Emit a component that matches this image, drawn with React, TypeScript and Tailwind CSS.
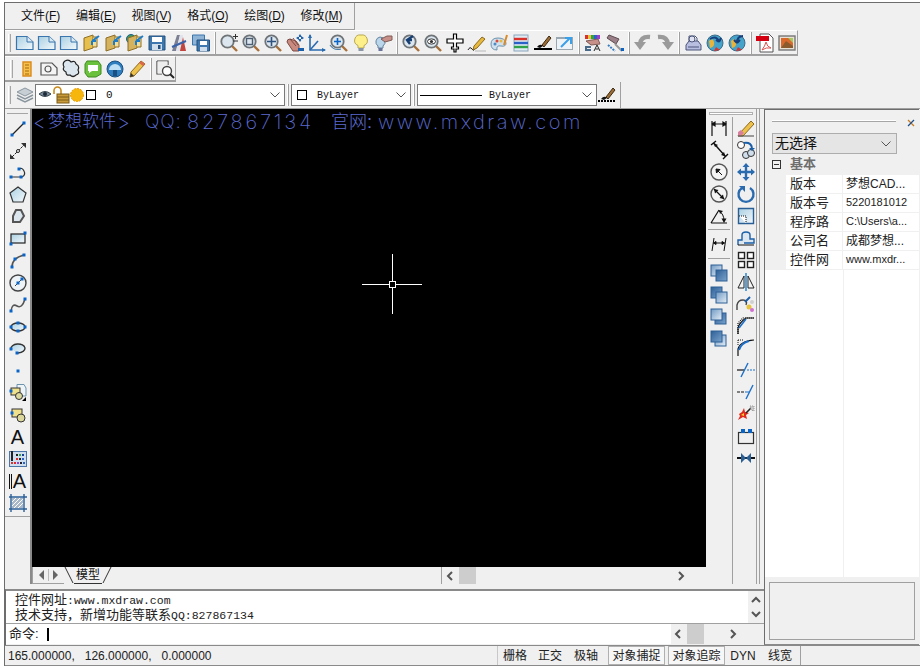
import type { ReactNode } from "react";

const sans = "font-['Liberation_Sans','Noto_Sans_CJK_SC',sans-serif]";
const B = "#0a64c8";

function Ic({ children, size = 20 }: { children: ReactNode; size?: number }) {
  return (
    <svg width={size} height={size} viewBox="0 0 20 20" className="block shrink-0">
      {children}
    </svg>
  );
}

function Defs() {
  return (
    <svg className="block h-0 w-0">
      <defs>
        <linearGradient id="doc" x1="0" y1="0" x2="1" y2="1">
          <stop offset="0" stopColor="#a9cfe2" />
          <stop offset="1" stopColor="#f4f9fc" />
        </linearGradient>
        <linearGradient id="sq" x1="0" y1="0" x2="1" y2="1">
          <stop offset="0" stopColor="#2d5f96" />
          <stop offset="1" stopColor="#7ba3cc" />
        </linearGradient>
        <linearGradient id="sq2" x1="0" y1="0" x2="1" y2="1">
          <stop offset="0" stopColor="#6f98c4" />
          <stop offset="1" stopColor="#e6eff6" />
        </linearGradient>
      </defs>
    </svg>
  );
}

const G = ({ x, y }: { x: number; y: number }) => <rect x={x - 1.5} y={y - 1.5} width="3" height="3" fill={B} />;

const Doc = () => (
  <Ic>
    <path d="M1.5 3.5H12L18 9V16.5H1.5Z" fill="url(#doc)" stroke="#3a76ad" strokeWidth="1.2" />
    <path d="M12 3.5V9H18" fill="#dbe9f2" stroke="#3a76ad" />
  </Ic>
);

const Folder = ({ c = "#e7bf4f", globe }: { c?: string; globe?: boolean }) => (
  <Ic>
    {globe && <circle cx="6" cy="6" r="4.5" fill="#3f9a5f" stroke="#1e5d8a" />}
    <path d="M3 5L12 2V15L3 18Z" fill={c} stroke="#8e6d24" />
    <path d="M12 4H16V14H12" fill="#f3dc94" stroke="#8e6d24" />
    <path d="M18 3L11 8M11 8L15 8M11 8V12" stroke="#1c7cc9" strokeWidth="2" fill="none" />
  </Ic>
);

const Floppy = () => (
  <Ic>
    <path d="M2 3H18V17H2Z" fill="#3e77ad" stroke="#23507f" />
    <rect x="5" y="4" width="10" height="5" fill="#fff" />
    <rect x="5" y="11" width="10" height="6" fill="#cfdeea" />
    <rect x="11" y="12" width="2.5" height="4" fill="#23507f" />
  </Ic>
);

const Mag = ({ children }: { children?: ReactNode }) => (
  <>
    <path d="M12.5 12.5L18 18" stroke="#a8703a" strokeWidth="2.4" />
    <circle cx="8.5" cy="8.5" r="6.2" fill="#dbe6ee" stroke="#6f7478" strokeWidth="1.8" />
    {children}
  </>
);

const Globe = ({ flip }: { flip?: boolean }) => (
  <Ic>
    <circle cx="10" cy="10" r="8" fill="#45a3c9" stroke="#3b6a8a" />
    <path d="M4 8Q8 4 9 9T5 15" fill="#e9b43c" />
    <path d="M11 14L15 17L9 18Z" fill="#d8342b" />
    <path
      d={flip ? "M16 3Q10 3 10 10M10 10L7 7M10 10L13 7" : "M5 6Q12 2 14 9M14 9L11 7M14 9L16 5"}
      stroke="#163f7c"
      strokeWidth="2"
      fill="none"
    />
  </Ic>
);

const rowTwo: ReactNode[][] = [
  [
    <Doc />,
    <Doc />,
    <Doc />,
    <Folder />,
    <Folder c="#d4b25e" />,
    <Folder c="#d4b25e" globe />,
    <Floppy />,
    <Ic>
      <path d="M3 18L8 2H11L7 18Z" fill="#7d7f92" />
      <path d="M7 18L11 2H14L13 18Z" fill="#e1e3ea" />
      <path d="M11 18L14 4L17 18Z" fill="#c2453f" />
      <path d="M3 14L17 8" stroke="#3a62a8" strokeWidth="2" />
    </Ic>,
    <Ic>
      <path d="M1.5 2H13.5V12H1.5Z" fill="#8fb4d6" stroke="#3a76ad" />
      <path d="M6 7H18.5V18H6Z" fill="#3e77ad" stroke="#23507f" />
      <rect x="9" y="8" width="7" height="4" fill="#fff" />
      <rect x="9" y="14" width="7" height="4" fill="#cfdeea" />
    </Ic>,
  ],
  [
    <Ic>
      <Mag />
      <path d="M14 3.5H19M16.5 1V6M14 8H19" stroke="#333" />
    </Ic>,
    <Ic>
      <Mag>
        <rect x="5.5" y="5.5" width="6" height="6" fill="none" stroke="#4e5e72" strokeWidth="1.4" />
      </Mag>
    </Ic>,
    <Ic>
      <Mag>
        <path d="M8.5 4V13M4 8.5H13" stroke="#30527f" strokeWidth="1.6" />
      </Mag>
    </Ic>,
    <Ic>
      <path d="M2 9Q2 6 5 6L11 8L14 12V18H8Z" fill="#c98a80" stroke="#7d4a44" />
      <path d="M5 6L11 13M8 5L13 12" stroke="#7d4a44" />
      <path d="M15 1L13 4H17ZM15 9L13 6H17ZM11 5L14 3V7ZM19 5L16 3V7Z" fill="#1b5fa8" />
      <rect x="13" y="15" width="6" height="3" fill="#1b5fa8" />
    </Ic>,
    <Ic>
      <path d="M3 2V17H18" fill="none" stroke="#2a6bb0" strokeWidth="1.6" />
      <path d="M3 17L11 8" stroke="#2a6bb0" strokeWidth="1.6" />
      <path d="M1 5L3 1L5 5ZM15 15L19 17L15 19Z" fill="#2a6bb0" />
    </Ic>,
    <Ic>
      <Mag>
        <path d="M8.5 5V12M5 8.5H12" stroke={B} strokeWidth="1.6" />
      </Mag>
      <path d="M1 12Q5 18 12 16" fill="none" stroke="#4e7ea8" strokeWidth="1.2" />
    </Ic>,
    <Ic>
      <path d="M10 2A5.5 5.5 0 0 0 7 12.5V15H13V12.5A5.5 5.5 0 0 0 10 2Z" fill="#fdf08a" stroke="#b9a850" />
      <rect x="7.5" y="15" width="5" height="3" fill="#8a96a6" />
    </Ic>,
    <Ic>
      <path d="M7 4A5 5 0 0 0 5 13V15H10V13A5 5 0 0 0 7 4Z" fill="#b9d6ea" stroke="#66849e" />
      <rect x="5.5" y="15" width="4" height="3" fill="#66749a" />
      <path d="M8 6L14 3L19 3V7L12 9Z" fill="#c7918a" stroke="#805a54" />
    </Ic>,
  ],
  [
    <Ic>
      <Mag />
      <path d="M12 3L6 7L9 11M6 7H11" stroke="#173f73" strokeWidth="2.4" fill="none" />
    </Ic>,
    <Ic>
      <Mag>
        <ellipse cx="8.5" cy="8.5" rx="4" ry="2.6" fill="#fff" stroke="#333" />
        <circle cx="8.5" cy="8.5" r="1.6" fill="#333" />
      </Mag>
    </Ic>,
    <Ic>
      <path
        d="M8.5 1H11.5V6H18V10H11.5V14H13.5V16H11V19H9V16H6.5V14H8.5V10H2V6H8.5Z"
        fill="#fff"
        stroke="#000"
        strokeWidth="1.2"
      />
    </Ic>,
    <Ic>
      <path d="M1 17Q3 13 5 16T8 15" fill="none" stroke="#222" />
      <path d="M7 13L15 4L18 6L10 15L6 17Z" fill="#e8b93c" stroke="#8a6a20" />
      <path d="M8 18H19" stroke="#b8b8b8" />
    </Ic>,
    <Ic>
      <path d="M2 11Q2 5 9 5T17 10Q17 14 12 13T8 17Q2 17 2 11Z" fill="#cfe1ee" stroke="#6d93ad" />
      <circle cx="6" cy="11" r="1.5" fill="#4f8ac2" />
      <circle cx="8" cy="8" r="1.5" fill="#d94a3c" />
      <circle cx="12" cy="8" r="1.5" fill="#e8b93c" />
      <path d="M15 12L18 2" stroke="#d98a2b" strokeWidth="2" />
    </Ic>,
    <Ic>
      <rect x="3" y="2" width="14" height="16" fill="#dfeaf2" stroke="#8aa6bc" />
      <path d="M3 6H16" stroke="#d9302a" strokeWidth="2.4" />
      <path d="M3 10H17" stroke="#2a62c8" strokeWidth="2.4" />
      <path d="M3 14H17" stroke="#2fa24a" strokeWidth="2.4" />
    </Ic>,
    <Ic>
      <path d="M9 12L16 3L18 5L11 14Z" fill="#9c6c34" stroke="#3c2a12" />
      <path d="M4 14Q7 10 10 13L7 15Z" fill="#111" />
      <path d="M1 16H19" stroke="#000" strokeWidth="2" />
    </Ic>,
    <Ic>
      <rect x="1.5" y="4.5" width="16" height="12" fill="#eef3f7" stroke="#9aa6b0" />
      <path d="M2 5H17" stroke="#9aa6b0" strokeWidth="2" />
      <path d="M6 14L15 5M10 5H16V11" stroke="#3ba0ea" strokeWidth="2" fill="none" />
    </Ic>,
  ],
  [
    <Ic>
      <rect x="2" y="2" width="3" height="4" fill="#d9302a" />
      <rect x="5" y="2" width="3" height="4" fill="#e8c33c" />
      <rect x="8" y="2" width="3" height="4" fill="#2fa24a" />
      <rect x="11" y="2" width="3" height="4" fill="#2a62c8" />
      <rect x="14" y="2" width="3" height="4" fill="#a03cc8" />
      <path d="M3 8L15 6L17 11L8 12Z" fill="#c7918a" stroke="#805a54" />
      <path d="M2 13H8V15H4V16H8V18H2Z" fill="#4a6a8a" />
      <path d="M11 18L14 12L17 18M12.5 16H15.5" stroke="#222" fill="none" />
    </Ic>,
    <Ic>
      <path d="M4 2L14 6L11 11L2 5Z" fill="#9a7f88" stroke="#5c4a50" />
      <path d="M3 12L10 18" stroke="#3b7cc0" strokeWidth="2" strokeDasharray="2 1" />
      <path d="M10 11L17 18" stroke="#999" strokeWidth="2" />
      <rect x="16" y="15" width="3" height="3" fill={B} />
    </Ic>,
  ],
  [
    <Ic>
      <path d="M17 4Q8 3 7 11" fill="none" stroke="#9a9a9a" strokeWidth="4.4" />
      <path d="M1 9H13L7 17Z" fill="#9a9a9a" />
    </Ic>,
    <Ic>
      <path d="M3 4Q12 3 13 11" fill="none" stroke="#9a9a9a" strokeWidth="4.4" />
      <path d="M7 9H19L13 17Z" fill="#9a9a9a" />
    </Ic>,
  ],
  [
    <Ic>
      <path d="M6 8V3H12L14 5V9" fill="#fff" stroke="#4a5478" />
      <path d="M3 12L6 8H15L18 12V17H3Z" fill="#b8bee0" stroke="#4a5478" />
      <circle cx="9" cy="6" r="3" fill="#dfe2f2" stroke="#4a5478" />
      <path d="M5 14H16" stroke="#4a5478" />
    </Ic>,
    <Globe />,
    <Globe flip />,
  ],
  [
    <Ic>
      <path d="M5 1H14L18 5V19H5Z" fill="#fff" stroke="#555" />
      <rect x="1" y="3" width="13" height="5" fill="#d40012" />
      <path d="M7 17Q10 13 11 9Q12 14 16 15Q11 14 7 17Z" fill="none" stroke="#d9534f" />
    </Ic>,
    <Ic>
      <rect x="2" y="3" width="16" height="14" fill="#e8e0d4" stroke="#777" strokeWidth="1.4" />
      <rect x="4" y="5" width="12" height="10" fill="#d9682c" />
      <path d="M4 15L9 8L16 13V15Z" fill="#8a5a2c" />
      <path d="M11 5L16 5L16 10Z" fill="#a8c860" />
    </Ic>,
  ],
];

const rowThree: ReactNode[][] = [
  [
    <Ic>
      <path d="M6 3H14V17H6Z" fill="#f6c04a" stroke="#d98a1c" strokeWidth="1.4" />
      <path d="M8 6H12M8 9H12M8 12H12M8 15H12" stroke="#a8660c" />
    </Ic>,
    <Ic>
      <path d="M2 4H13L18 9V16H2Z" fill="#f4f4f4" stroke="#555" strokeWidth="1.2" />
      <circle cx="9" cy="10" r="3" fill="none" stroke="#555" strokeWidth="1.2" />
    </Ic>,
    <Ic>
      <path
        d="M4 2Q8 0 10 3Q14 1 15 5Q19 7 17 11Q19 15 15 16Q12 19 9 16Q5 17 5 13Q1 11 3 8Q1 4 4 2Z"
        fill="#dbe6ee"
        stroke="#222"
        strokeWidth="1.2"
      />
    </Ic>,
    <Ic>
      <path d="M4 2H15L18 6V15L13 18H5L2 14V5Z" fill="#6ac23c" stroke="#3f8a20" />
      <path d="M5 6H15V12H9L6 14V12H5Z" fill="#fff" />
    </Ic>,
    <Ic>
      <circle cx="10" cy="10" r="8" fill="#2f7fc0" stroke="#1b4f80" />
      <path d="M4 11A6 6 0 0 1 16 11Z" fill="#bfe0f4" />
      <path d="M8 11H12V17H8Z" fill="#1b4f80" />
    </Ic>,
    <Ic>
      <path d="M3 18L4 13L14 2L18 5L7 17Z" fill="#eec04c" stroke="#8a6a20" />
      <path d="M3 18L4 14L7 17Z" fill="#333" />
      <path d="M14 2L18 5L16 7L12 4Z" fill="#d9684c" />
    </Ic>,
  ],
  [
    <Ic>
      <path d="M2 2H13V6M2 2V15H7" fill="#fff" stroke="#444" strokeWidth="1.2" />
      <rect x="2.5" y="2.5" width="10" height="12" fill="#eee" />
      <circle cx="12" cy="12" r="4.5" fill="#fff" stroke="#444" strokeWidth="1.4" />
      <path d="M15 15L19 19" stroke="#222" strokeWidth="2" />
    </Ic>,
  ],
];

const leftIcons: ReactNode[] = [
  <Ic><path d="M4 16L16 4" stroke="#222" strokeWidth="1.2" /><G x={4} y={16} /><G x={16} y={4} /></Ic>,
  <Ic><path d="M4 16L16 4" stroke="#222" strokeDasharray="3 1" /><circle cx="10" cy="10" r="1.5" fill="#fff" stroke="#222" /><path d="M2 18V13L7 18ZM18 2V7L13 2Z" fill="#333" /></Ic>,
  <Ic><path d="M3 14H14Q18 12 16 8T11 6" fill="none" stroke="#333" strokeWidth="1.2" /><G x={3} y={14} /><G x={13} y={14} /><G x={11} y={6} /></Ic>,
  <Ic><path d="M10 2L18 8L15 17H5L2 8Z" fill="url(#doc)" stroke="#333" strokeWidth="1.2" /></Ic>,
  <Ic><path d="M8 3H13L16 9L12 15H5V9Z" fill="#dbe6ee" stroke="#555" strokeWidth="2" /></Ic>,
  <Ic><rect x="3" y="5" width="14" height="9" fill="url(#doc)" stroke="#222" strokeWidth="1.2" /><G x={3} y={15} /><G x={17} y={4} /></Ic>,
  <Ic><path d="M4 16Q4 7 16 4" fill="none" stroke="#555" strokeWidth="1.6" /><G x={4} y={16} /><G x={7} y={8} /><G x={16} y={4} /></Ic>,
  <Ic><circle cx="10" cy="10" r="8" fill="#eef3f7" stroke="#444" strokeWidth="1.4" /><path d="M7 13L13 7" stroke="#444" /><G x={14} y={6} /><G x={10} y={10} /></Ic>,
  <Ic><path d="M3 16Q4 8 9 11T17 4" fill="none" stroke="#555" strokeWidth="1.6" /><G x={3} y={16} /><G x={17} y={4} /></Ic>,
  <Ic><ellipse cx="10" cy="10" rx="7" ry="4" fill="url(#doc)" stroke="#333" strokeWidth="1.4" /><G x={10} y={6} /><G x={3} y={10} /><G x={17} y={10} /><G x={10} y={14} /></Ic>,
  <Ic><path d="M3 10A7 4.5 0 0 1 17 9Q17 13 10 14" fill="url(#doc)" stroke="#333" strokeWidth="1.4" /><G x={3} y={10} /><G x={9} y={14} /></Ic>,
  <Ic><G x={10} y={10} /></Ic>,
  <Ic><path d="M9 1.5H16L18 5V13H9Z" fill="#eef3f7" stroke="#6d93ad" /><rect x="3" y="5" width="9" height="7" fill="#f0e28c" stroke="#333" /><circle cx="11" cy="13" r="3.5" fill="#dcd79c" stroke="#333" /><G x={3} y={8} /><path d="M14 18L18 14V18Z" fill="#000" /></Ic>,
  <Ic><rect x="4" y="4" width="10" height="8" fill="#f0e28c" stroke="#333" /><circle cx="13" cy="13" r="4" fill="#dcd79c" stroke="#333" /><G x={4} y={8} /></Ic>,
  <span className={`text-[20px] leading-none text-[#111] ${sans}`}>A</span>,
  <Ic><rect x="1.5" y="2.5" width="17" height="15" fill="#cfdeee" stroke="#4a76a8" /><path d="M4 2V12" stroke="#222" strokeWidth="2" /><rect x="8" y="5" width="2" height="2" fill="#222" /><rect x="11" y="5" width="2" height="2" fill="#2fa24a" /><rect x="14" y="5" width="2" height="2" fill="#1c3a9c" /><rect x="8" y="9" width="2" height="2" fill="#d9302a" /><rect x="11" y="9" width="2" height="2" fill="#222" /><rect x="14" y="9" width="2" height="2" fill="#2a62c8" /><rect x="3" y="13" width="2" height="2" fill="#d9302a" /><rect x="6" y="13" width="2" height="2" fill="#d9302a" /><rect x="9" y="13" width="2" height="2" fill="#a03cc8" /><rect x="12" y="13" width="2" height="2" fill="#222" /><rect x="15" y="13" width="2" height="2" fill="#2a62c8" /></Ic>,
  <span className={`flex items-center text-[20px] leading-none text-[#111] ${sans}`}><span className="mr-[1px] h-[15px] w-[3px] border-x border-[#111]" />A</span>,
  <Ic><path d="M3 1V19M16 1V19M1 4H19M1 16H19" stroke="#2a5f96" strokeWidth="1.4" /><path d="M4 5H15V15H4Z" fill="#a8b8c8" /><path d="M4 9L8 5M4 13L12 5M6 15L15 6M10 15L15 10" stroke="#fff" /></Ic>,
];

const Stack = ({ front = false, dark = false }: { front?: boolean; dark?: boolean }) => (
  <Ic>
    <rect x={front ? 6 : 2} y={front ? 6 : 2} width="11" height="11" fill={dark ? "url(#sq)" : "url(#sq2)"} stroke="#2d5f96" />
    <rect x={front ? 2 : 7} y={front ? 2 : 7} width="11" height="11" fill={dark ? "url(#sq2)" : "url(#sq)"} stroke="#2d5f96" />
  </Ic>
);

const DimH = ({ slant }: { slant?: boolean }) => (
  <Ic>
    {slant ? (
      <path d="M5 4L3 17M17 4L15 17M4.5 9H15.5M4.5 9L7 7.5V10.5ZM15.5 9L13 7.5V10.5Z" stroke="#111" fill="#111" />
    ) : (
      <path d="M3 3V18M17 3V18M3 6H17M3 6L6 4V8ZM17 6L14 4V8Z" stroke="#111" fill="#111" strokeWidth="1.2" />
    )}
  </Ic>
);

const colA1: ReactNode[] = [
  <DimH />,
  <Ic><path d="M2 5L7 1M14 19L19 14M4.5 3L16.5 16.5" stroke="#111" strokeWidth="1.4" /><path d="M4.5 3L9 5L6 7ZM16.5 16.5L12 15L15 12Z" fill="#111" /></Ic>,
  <Ic><circle cx="10" cy="10" r="8" fill="#f4f4f4" stroke="#555" strokeWidth="1.4" /><path d="M13 13L7 7M7 7L11 7.5L7.5 11Z" stroke="#111" fill="#111" /></Ic>,
  <Ic><circle cx="10" cy="10" r="8" fill="#f4f4f4" stroke="#555" strokeWidth="1.4" /><path d="M5 5L15 15" stroke="#111" strokeWidth="1.2" /><path d="M5 5L9.5 6L6 9.5ZM15 15L10.5 14L14 10.5Z" fill="#111" /></Ic>,
  <Ic><path d="M2 17L10 4M2 17H18" stroke="#111" strokeWidth="1.2" /><path d="M10 5Q15 8 15 15" fill="none" stroke="#111" /><path d="M15 17L12.5 12.5H17.5ZM10 4L14 5L11 8Z" fill="#111" /></Ic>,
];

const colB: ReactNode[] = [
  <Ic><path d="M3 16L15 3L18 6L7 18L2 18Z" fill="#eec04c" stroke="#8a6a20" /><path d="M2 14L5 12L8 15L5 18H2Z" fill="#d77f9c" /><path d="M2 18H18" stroke="#444" /></Ic>,
  <Ic><circle cx="5" cy="5" r="3.5" fill="#fff" stroke="#333" /><circle cx="10" cy="15" r="3.5" fill="#cfdeea" stroke="#333" /><circle cx="15" cy="13" r="3.5" fill="#cfdeea" stroke="#333" /><path d="M8 3Q15 2 16 8" fill="none" stroke="#1b5fa8" strokeWidth="2" /><path d="M13 8H19L16 11Z" fill="#1b5fa8" /></Ic>,
  <Ic><path d="M10 1L13.5 5H11.2V8.8H15V6.5L19 10L15 13.5V11.2H11.2V15H13.5L10 19L6.5 15H8.8V11.2H5V13.5L1 10L5 6.5V8.8H8.8V5H6.5Z" fill="#2a6bb0" /></Ic>,
  <Ic><path d="M6 4A7.5 7.5 0 1 0 14 4" fill="none" stroke="#2a6bb0" strokeWidth="2.4" /><path d="M3 2H9V8Z" fill="#2a6bb0" /></Ic>,
  <Ic><path d="M2.5 2.5H17.5V17.5H2.5Z" fill="url(#doc)" stroke="#2a5f96" strokeWidth="1.4" /><path d="M3 10H10V17" fill="#fff" stroke="#111" strokeDasharray="1 1" /></Ic>,
  <Ic><path d="M2 17V12H6V7Q6 4 10 4T14 7V11H18V15H8" fill="#dbe6ee" stroke="#1b5fa8" strokeWidth="1.4" /><path d="M2 17H18" stroke="#111" /></Ic>,
  <Ic><g fill="#fff" stroke="#222" strokeWidth="1.4"><rect x="2.5" y="2.5" width="6" height="6" /><rect x="11.5" y="2.5" width="6" height="6" /><rect x="2.5" y="11.5" width="6" height="6" /><rect x="11.5" y="11.5" width="6" height="6" /></g></Ic>,
  <Ic><path d="M10 1V19" stroke="#1b7fd0" strokeWidth="1.4" /><path d="M8 4V16H2ZM12 4V16H18Z" fill="#f4f4f4" stroke="#222" /></Ic>,
  <Ic><path d="M1 16V11Q2 6 7 6T10 11" fill="none" stroke="#444" strokeWidth="1.4" /><path d="M14 3L9 8" stroke="#1b5fa8" strokeWidth="2" /><circle cx="13" cy="13" r="2.5" fill="#e8c33c" /><circle cx="16" cy="8" r="2" fill="#cfcfcf" /><circle cx="16" cy="16" r="2" fill="#d070d0" /></Ic>,
  <Ic><path d="M2 18V7L7 2H18" fill="none" stroke="#111" strokeWidth="1.2" strokeDasharray="1 1" /><path d="M2 18V12Q3 7 10 2H18" fill="none" stroke="#111" strokeWidth="1.2" /><path d="M3 12L10 3" stroke="#1b6fc8" strokeWidth="1.6" /></Ic>,
  <Ic><path d="M2 2H8M2 2V8" stroke="#111" strokeDasharray="1 1" fill="none" /><path d="M2 18V11Q4 3 18 2" fill="none" stroke="#111" strokeWidth="1.2" /><path d="M3 12Q5 5 13 3" fill="none" stroke="#1b6fc8" strokeWidth="2" /></Ic>,
  <Ic><path d="M1 10H8" stroke="#111" strokeWidth="1.2" /><path d="M5 17L12 3" stroke="#1b6fc8" strokeWidth="1.4" /><path d="M11 10H19" stroke="#1b6fc8" strokeDasharray="2 1" /></Ic>,
  <Ic><path d="M1 10H8" stroke="#111" strokeDasharray="3 1" strokeWidth="1.2" /><path d="M9 10H13" stroke="#1b6fc8" /><path d="M10 17L17 3" stroke="#1b6fc8" strokeWidth="1.4" /></Ic>,
  <Ic><path d="M3 10L6 8L8 4L9 8L13 9L10 11L11 15L7 13L2 16L4 12Z" fill="#e02a1c" /><path d="M5 11L8 9L8 12Z" fill="#f4d03c" /><path d="M10 9L15 4" stroke="#222" strokeWidth="1.6" /><path d="M14 2L18 2L18 7L15 6Z" fill="#c8c8c8" stroke="#999" strokeDasharray="1 1" /></Ic>,
  <Ic><rect x="2.5" y="6.5" width="15" height="11" fill="none" stroke="#333" strokeWidth="1.2" /><rect x="5" y="3" width="4" height="4" fill={B} /><rect x="12" y="3" width="4" height="4" fill={B} /></Ic>,
  <Ic><path d="M1 10H19" stroke="#111" strokeWidth="2" /><path d="M5 5L10 10L5 15ZM15 5L10 10L15 15Z" fill="#2a5f96" /></Ic>,
];

const Grip = () => <div className="mr-[3px] h-[18px] w-[3px] shrink-0 border-l border-r border-l-white border-r-[#a6a6a6] bg-[#e4e4e4]" />;
const VSep = () => (
  <div className="flex h-[22px] w-[6px] shrink-0 justify-start">
    <div className="ml-[2px] h-full w-[2px] border-r border-[#a0a0a0] bg-white" />
  </div>
);

function IconRow({ groups }: { groups: ReactNode[][] }) {
  return (
    <>
      {groups.map((g, i) => (
        <div key={i} className="flex items-center">
          {i > 0 && <VSep />}
          {g.map((icon, j) => (
            <div key={j} className="flex h-[22px] w-[22px] items-center justify-center">
              {icon}
            </div>
          ))}
        </div>
      ))}
    </>
  );
}

const Chevron = () => (
  <svg width="10" height="6" viewBox="0 0 10 6" className="shrink-0">
    <path d="M0.5 0.5L5 5L9.5 0.5" fill="none" stroke="#555" />
  </svg>
);

function Combo({ className, children }: { className: string; children: ReactNode }) {
  return (
    <div className={`flex h-[22px] shrink-0 items-center border border-[#7a7a7a] bg-white pr-[4px] ${className}`}>
      <div className="flex min-w-0 flex-1 items-center">{children}</div>
      <Chevron />
    </div>
  );
}

const Arrow = ({ d, small }: { d: "l" | "r" | "u" | "d"; small?: boolean }) => {
  const p = { l: "M6 1L2 5L6 9", r: "M3 1L7 5L3 9", u: "M1 7L5 3L9 7", d: "M1 3L5 7L9 3" }[d];
  return (
    <svg width="10" height="10" viewBox="0 0 10 10" className="shrink-0">
      <path d={p} fill="none" stroke={small ? "#777" : "#555"} strokeWidth="2" />
    </svg>
  );
};

function PropRow({ name, value, small }: { name: string; value: string; small?: boolean }) {
  return (
    <div className="mb-[1px] flex h-[18px] items-center bg-[#f0f0f0] pl-[21px]">
      <div className="flex h-full w-[56px] items-center bg-white pb-[1px] pl-[4px] text-[13px] text-[#222]">{name}</div>
      <div className={`ml-[1px] flex h-full flex-1 items-center bg-white pb-[1px] pl-[3px] text-[#222] ${small ? "text-[11px]" : "text-[12px]"}`}>
        {value}
      </div>
    </div>
  );
}

function Pane({ label, boxed, w }: { label: string; boxed?: boolean; w: string }) {
  return (
    <div className={`flex h-[19px] items-center justify-center text-[12px] text-[#222] ${w} ${boxed ? "border border-[#b0b0b0] bg-[#f7f7f7]" : ""}`}>
      {label}
    </div>
  );
}

export default function App() {
  return (
    <div className={`h-[668px] w-[920px] overflow-hidden bg-white pl-[4px] pt-[2px] text-[12px] ${sans}`}>
      <Defs />
      <div className="flex h-[664px] w-[916px] flex-col border-l border-t border-[#6d6d6d] bg-[#f0f0f0]">
        {/* menu */}
        <div className="flex h-[27px] w-[350px] shrink-0 items-center gap-[15.6px] border-b border-r border-[#a0a0a0] pl-[16px] text-[12px] text-[#111]">
          {[
            ["文件", "F"],
            ["编辑", "E"],
            ["视图", "V"],
            ["格式", "O"],
            ["绘图", "D"],
            ["修改", "M"],
          ].map(([t, k]) => (
            <span key={k} className="whitespace-nowrap">
              {t}(<span className="underline">{k}</span>)
            </span>
          ))}
        </div>

        {/* standard toolbar */}
        <div className="flex h-[26px] w-[793px] shrink-0 items-center border-b-2 border-r border-t border-b-[#a0a0a0] border-r-[#a0a0a0] border-t-white pl-[3px]">
          <Grip />
          <IconRow groups={rowTwo} />
        </div>

        {/* second toolbar */}
        <div className="flex h-[26px] w-[171px] shrink-0 items-center border-b-2 border-r border-t border-b-[#a0a0a0] border-r-[#a0a0a0] border-t-white pl-[5px]">
          <Grip />
          <IconRow groups={rowThree} />
        </div>

        {/* layer toolbar */}
        <div className="flex h-[26px] w-[616px] shrink-0 items-center border-r border-[#a0a0a0] pl-[3px]">
          <Grip />
          <div className="flex h-[22px] w-[21px] shrink-0 items-center justify-center">
            <Ic>
              <path d="M10 3L18 7L10 11L2 7Z" fill="#c7ced4" stroke="#8a969e" />
              <path d="M2 10L10 14L18 10M2 13L10 17L18 13" fill="none" stroke="#8a969e" strokeWidth="1.4" />
            </Ic>
          </div>
          <Combo className="w-[250px]">
            <svg width="14" height="12" viewBox="0 0 14 12" className="ml-[2px] shrink-0">
              <path d="M1 5Q7 0 13 5Q7 10 1 5Z" fill="#7a8a9a" stroke="#37474f" />
              <circle cx="7" cy="5" r="2" fill="#1c2a36" />
            </svg>
            <svg width="18" height="18" viewBox="0 0 18 18" className="shrink-0">
              <path d="M2 8V4.5A3.5 3.5 0 0 1 9 4.5V8" fill="none" stroke="#c88a1c" strokeWidth="1.6" />
              <rect x="5" y="8" width="12" height="9" fill="#c99a3c" stroke="#7a5a14" />
              <path d="M5 11H17M5 14H17" stroke="#7a5a14" />
            </svg>
            <svg width="14" height="14" viewBox="0 0 14 14" className="shrink-0">
              <circle cx="7" cy="7" r="6.5" fill="#f6b60c" stroke="#e89a00" strokeDasharray="2 1" />
            </svg>
            <div className="ml-[2px] h-[10px] w-[10px] shrink-0 border border-black bg-white" />
            <span className="ml-[10px] font-['Liberation_Mono',monospace] text-[11px] text-[#111]">0</span>
          </Combo>
          <div className="ml-[2px] mr-[2px] h-[22px] w-[2px] shrink-0 border-r border-[#a0a0a0] bg-white" />
          <Combo className="w-[120px]">
            <div className="ml-[5px] h-[10px] w-[10px] shrink-0 border border-black bg-white" />
            <span className="ml-[10px] font-['Liberation_Mono',monospace] text-[10px] text-[#111]">ByLayer</span>
          </Combo>
          <div className="ml-[2px] mr-[2px] h-[22px] w-[2px] shrink-0 border-r border-[#a0a0a0] bg-white" />
          <Combo className="w-[180px]">
            <div className="ml-[2px] h-px w-[62px] shrink-0 bg-black" />
            <span className="ml-[7px] font-['Liberation_Mono',monospace] text-[10px] text-[#111]">ByLayer</span>
          </Combo>
          <div className="ml-[-1px] flex h-[22px] w-[22px] items-center justify-center">
            <Ic>
              <path d="M9 12L16 3L18 5L11 14Z" fill="#9c6c34" stroke="#3c2a12" />
              <path d="M4 14Q7 10 10 13L7 15Z" fill="#111" />
              <path d="M1 16H19" stroke="#000" strokeWidth="2" strokeDasharray="2 1" />
            </Ic>
          </div>
        </div>

        {/* body */}
        <div className="flex min-h-0 flex-1 border-t border-[#a0a0a0]">
          <div className="flex w-[759px] shrink-0 flex-col">
            <div className="flex h-[475px] shrink-0">
              {/* draw toolbar */}
              <div className="flex w-[27px] shrink-0 flex-col border-r-2 border-[#8a8a8a]">
                <div className="h-[408px] border-b border-[#a0a0a0]">
                  <div className="mx-[2px] mb-[4px] mt-[3px] h-[2px] border-b border-[#a6a6a6]" />
                  {leftIcons.map((icon, i) => (
                    <div key={i} className="flex h-[22px] items-center justify-center">
                      {icon}
                    </div>
                  ))}
                </div>
              </div>

              {/* canvas */}
              <div className="flex w-[674px] shrink-0 flex-col">
                <div className="relative h-[458px] shrink-0 overflow-hidden bg-black">
                  <div className="absolute left-[1px] top-[2px] flex h-[22px] items-center whitespace-nowrap text-[#5c6bd0]">
                    <span className="w-[15px] font-['Inter'] text-[20px] font-extralight">&lt;</span>
                    <span className="w-[69px] text-[17px] font-extralight">梦想软件</span>
                    <span className="w-[28px] font-['Inter'] text-[20px] font-extralight">&gt;</span>
                    <span className="w-[42px] font-['Inter'] text-[19px] font-extralight tracking-[1px]">QQ:</span>
                    <span className="w-[144px] font-['Inter'] text-[20px] font-extralight tracking-[2.8px]">827867134</span>
                    <span className="w-[47px] text-[18px] font-extralight">官网:</span>
                    <span className="w-[204px] font-['Inter'] text-[20px] font-extralight tracking-[2.5px]">www.mxdraw.com</span>
                  </div>
                  <svg width="62" height="62" viewBox="0 0 62 62" className="absolute left-[330px] top-[145px]">
                    <path d="M30.5 0V27M30.5 34V60M0 30.5H27M34 30.5H60" stroke="#fff" />
                    <rect x="27.5" y="27.5" width="6" height="6" fill="none" stroke="#fff" />
                  </svg>
                </div>
                {/* model tabs */}
                <div className="flex h-[17px] shrink-0 items-center">
                  <div className="flex h-full w-[32px] items-center justify-center gap-[3px] border-b border-l border-[#a0a0a0]">
                    <svg width="7" height="10" viewBox="0 0 7 10"><path d="M6 0V10L1 5Z" fill="#666" /></svg>
                    <div className="h-[12px] w-px bg-[#bbb]" />
                    <svg width="7" height="10" viewBox="0 0 7 10"><path d="M1 0V10L6 5Z" fill="#666" /></svg>
                  </div>
                  <svg width="10" height="17" viewBox="0 0 10 17" className="shrink-0">
                    <path d="M1 0L9 16" stroke="#333" />
                  </svg>
                  <span className="w-[28px] border-b border-[#333] text-center text-[12px] leading-[16px] text-[#111]">模型</span>
                  <svg width="10" height="17" viewBox="0 0 10 17" className="shrink-0">
                    <path d="M9 0L1 16" stroke="#333" />
                  </svg>
                  <div className="h-full flex-1" />
                  <div className="flex h-full w-[265px] items-center border-l border-[#a0a0a0] pl-[4px] pr-[20px]">
                    <Arrow d="l" />
                    <div className="ml-[3px] h-full w-[17px] bg-[#cdcdcd]" />
                    <div className="flex-1" />
                    <Arrow d="r" />
                  </div>
                </div>
              </div>

              {/* modify toolbars */}
              <div className="flex w-[51px] shrink-0 flex-col border-r border-[#a0a0a0]">
                <div className="mx-[3px] mb-[2px] mt-[3px] h-[3px] shrink-0 border border-[#b0b0b0] bg-white" />
                <div className="flex min-h-0 flex-1">
                  <div className="w-[27px] shrink-0 border-r border-[#a0a0a0]">
                    {colA1.map((icon, i) => (
                      <div key={i} className="flex h-[22px] items-center justify-center">
                        {icon}
                      </div>
                    ))}
                    <div className="mx-[2px] mb-[3px] mt-[2px] h-px bg-[#a0a0a0]" />
                    <div className="flex h-[22px] items-center justify-center">
                      <DimH slant />
                    </div>
                    <div className="mx-[2px] mb-[3px] mt-[3px] h-px bg-[#a0a0a0]" />
                    {[<Stack />, <Stack dark />, <Stack front dark />, <Stack front />].map((icon, i) => (
                      <div key={i} className="flex h-[22px] items-center justify-center">
                        {icon}
                      </div>
                    ))}
                  </div>
                  <div className="flex-1 pl-[2px]">
                    {colB.map((icon, i) => (
                      <div key={i} className="flex h-[22px] items-center justify-center">
                        {icon}
                      </div>
                    ))}
                  </div>
                </div>
              </div>
              <div className="flex-1 pl-[2px]">
                <div className="h-full w-[1px] bg-[#a0a0a0]" />
              </div>
            </div>

            {/* command window */}
            <div className="mt-[5px] flex min-h-0 flex-1 flex-col border-l border-t-2 border-[#6d6d6d] border-t-[#8a8a8a]">
              <div className="flex h-[33px] shrink-0 border-b border-[#a0a0a0]">
                <div className="flex-1 bg-white pl-[9px] text-[13px] leading-[15px] text-[#222]">
                  <div className="h-[16px] whitespace-nowrap pt-px">
                    控件网址<span className="font-['Liberation_Mono',monospace] text-[11.5px]">:www.mxdraw.com</span>
                  </div>
                  <div className="h-[16px] whitespace-nowrap">
                    技术支持，新增功能等联系<span className="font-['Liberation_Mono',monospace] text-[11.5px]">QQ:827867134</span>
                  </div>
                </div>
                <div className="flex w-[16px] shrink-0 flex-col items-center justify-around bg-[#f0f0f0] py-[2px]">
                  <Arrow d="u" />
                  <Arrow d="d" />
                </div>
              </div>
              <div className="flex h-[20px] shrink-0">
                <div className="flex w-[665px] shrink-0 items-center bg-white pl-[3px] text-[13px] text-[#222]">
                  命令:
                  <div className="ml-[8px] h-[13px] w-[2px] bg-black" />
                </div>
                <div className="flex w-[71px] shrink-0 items-center bg-[#f0f0f0] pl-[3px] pr-[4px]">
                  <Arrow d="l" />
                  <div className="ml-[3px] h-full w-[17px] bg-[#cdcdcd]" />
                  <div className="flex-1" />
                  <Arrow d="r" />
                </div>
              </div>
            </div>
          </div>

          {/* properties */}
          <div className="flex w-[155px] shrink-0 flex-col border-b border-l border-t border-[#6d6d6d] border-b-[#8a8a8a]">
            <div className="flex h-[23px] shrink-0 items-start pl-[7px] pt-[9px]">
              <div className="mt-[1px] h-[2px] w-[124px] border-b border-[#a6a6a6] bg-white" />
              <svg width="8" height="8" viewBox="0 0 8 8" className="ml-[11px]">
                <path d="M1 1L7 7" stroke="#c87a1c" strokeWidth="1.3" />
                <path d="M7 1L1 7" stroke="#1b4f90" strokeWidth="1.3" />
              </svg>
            </div>
            <div className="ml-[7px] flex h-[21px] w-[125px] shrink-0 items-center border border-[#adadad] bg-[#e5e5e5] pl-[2px] pr-[5px] text-[14px] text-[#111]">
              <span className="flex-1">无选择</span>
              <Chevron />
            </div>
            <div className="flex h-[21px] shrink-0 items-center pb-[1px] pl-[7px]">
              <div className="flex h-[9px] w-[9px] items-center justify-center border border-[#333]">
                <div className="h-px w-[5px] bg-[#333]" />
              </div>
              <span className="ml-[9px] text-[13px] font-bold text-[#6e6e6e]">基本</span>
            </div>
            <PropRow name="版本" value="梦想CAD..." />
            <PropRow name="版本号" value="5220181012" small />
            <PropRow name="程序路" value="C:\Users\a..." small />
            <PropRow name="公司名" value="成都梦想..." />
            <PropRow name="控件网" value="www.mxdr..." small />
            <div className="flex h-[307px] shrink-0 bg-white pl-[2px]">
              <div className="ml-[76px] h-full w-px bg-[#f0f0f0]" />
            </div>
            <div className="flex flex-1 px-[4px] pb-[4px] pt-[5px]">
              <div className="flex-1 border border-[#a0a0a0]" />
            </div>
          </div>
        </div>

        {/* status bar */}
        <div className="flex h-[21px] shrink-0 items-center border-t border-b border-[#8a8a8a] text-[12px]">
          <div className="flex h-full w-[493px] shrink-0 items-center gap-[10px] border-r border-[#c8c8c8] pl-[3px] text-[#222]">
            <span>165.000000,</span>
            <span>126.000000,</span>
            <span>0.000000</span>
          </div>
          <Pane label="栅格" w="w-[34px]" />
          <Pane label="正交" w="w-[36px]" />
          <Pane label="极轴" w="w-[36px]" />
          <Pane label="对象捕捉" boxed w="ml-[4px] w-[57px]" />
          <Pane label="对象追踪" boxed w="ml-[3px] w-[57px]" />
          <Pane label="DYN" w="ml-[4px] w-[28px]" />
          <Pane label="线宽" w="ml-[8px] w-[30px]" />
          <div className="ml-[5px] h-[19px] flex-1 border-l border-[#a0a0a0]" />
        </div>
      </div>
    </div>
  );
}
